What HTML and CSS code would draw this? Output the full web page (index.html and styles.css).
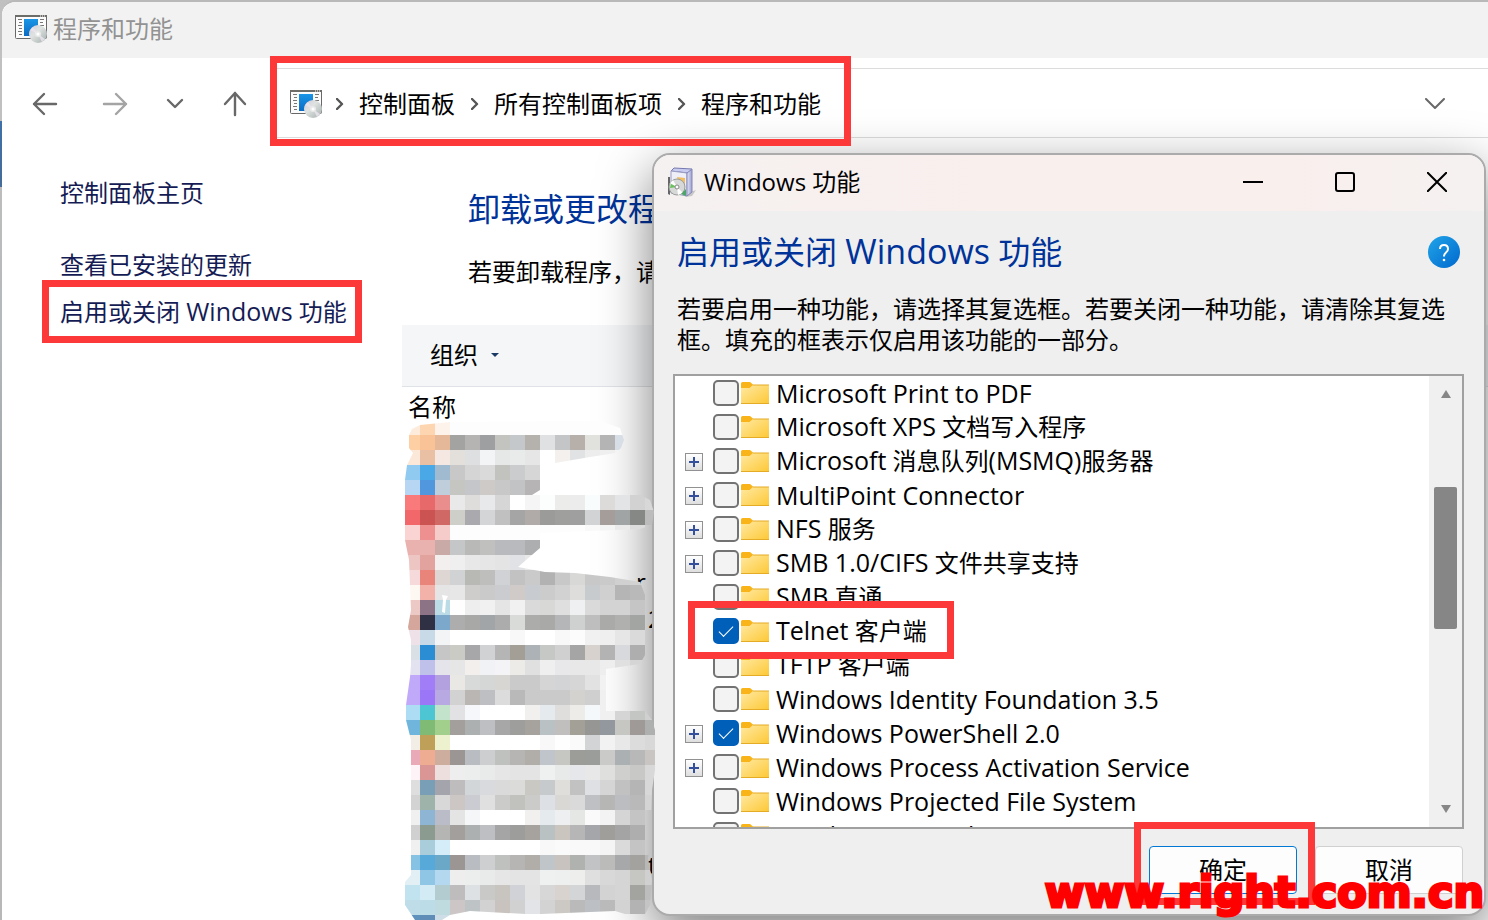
FILE: index.html
```html
<!DOCTYPE html>
<html lang="zh-CN">
<head>
<meta charset="utf-8">
<title>程序和功能</title>
<link rel="stylesheet" href="styles.css">
</head>
<body>
<svg class="defs" aria-hidden="true">
  <defs>
    <linearGradient id="gBlue" x1="0" y1="0" x2="0" y2="1"><stop offset="0" stop-color="#1a95e6"/><stop offset="1" stop-color="#0a6cc4"/></linearGradient>
    <linearGradient id="gDisc" x1="0" y1="0" x2="1" y2="1"><stop offset="0" stop-color="#d0cbd8"/><stop offset=".4" stop-color="#dfe3e2"/><stop offset="1" stop-color="#a3aeac"/></linearGradient>
    <linearGradient id="gFolder" x1="0" y1="0" x2="1" y2="1"><stop offset="0" stop-color="#ffe9a3"/><stop offset="1" stop-color="#fdc834"/></linearGradient>
    <linearGradient id="gBox" x1="0" y1="0" x2="1" y2="0"><stop offset="0" stop-color="#e6e8f8"/><stop offset="1" stop-color="#9b9ecf"/></linearGradient>
  </defs>
  <symbol id="program" viewBox="0 0 32 28">
    <rect x=".5" y=".5" width="31" height="23" rx="1" fill="#fbfbfb" stroke="#686868"/>
    <path d="M0 0h32v2H0z" fill="#6c6c69"/>
    <path d="M25 1h1M27 1h1M29 1h1" stroke="#fff"/>
    <path d="M3 4.500h4M4 7.500h3M3 10.500h4M4 13.500h3M3 16.500h4M4 19.500h3M25 4.500h4M25 7.500h3M25 10.500h4" stroke="#777"/>
    <path d="M9 4h14v17H9z" fill="url(#gBlue)"/>
    <circle cx="23" cy="19" r="9" fill="url(#gDisc)"/>
    <path d="M23 19l-8-4 3-3zM23 19l7 5-3 3z" fill="#eee5ef" opacity=".8"/>
    <circle cx="23" cy="19" r="3" fill="#e8ebea"/><circle cx="23" cy="19" r="1.500" fill="#fff"/>
  </symbol>
  <symbol id="folder" viewBox="0 0 28 23">
    <path d="M0 1.500Q0 0 1.500 0H9l3 2.500V6H0z" fill="#f9b41a"/>
    <path d="M0 6h8.500L12 3h15q1 0 1 1v17q0 1-1 1H1q-1 0-1-1z" fill="url(#gFolder)"/>
    <path d="M0 21.500h28M12 3h16" stroke="#e6ab25" fill="none"/>
  </symbol>
</svg>

<div class="desktop">
  <div class="window">
    <header class="titlebar">
      <svg class="program-icon"><use href="#program"/></svg>
      <span>程序和功能</span>
    </header>
    <div class="navbar">
      <nav class="history">
        <button aria-label="后退"><svg width="26" height="26" viewBox="0 0 26 26"><path d="M24 13H2M12 3L2 13l10 10"/></svg></button>
        <button class="dim" aria-label="前进"><svg width="26" height="26" viewBox="0 0 26 26"><path d="M2 13H24M14 3l10 10-10 10"/></svg></button>
        <button class="narrow" aria-label="最近"><svg width="18" height="12" viewBox="0 0 18 12"><path d="M2 2l7 7 7-7"/></svg></button>
        <button aria-label="向上"><svg width="26" height="26" viewBox="0 0 26 26"><path d="M12 24V2M2 13L12 2l10 11"/></svg></button>
      </nav>
      <div class="address">
        <svg class="program-icon"><use href="#program"/></svg>
        <svg class="sep" viewBox="0 0 8 12"><path d="M1 1l5 5-5 5"/></svg>
        <a href="#">控制面板</a>
        <svg class="sep" viewBox="0 0 8 12"><path d="M1 1l5 5-5 5"/></svg>
        <a href="#">所有控制面板项</a>
        <svg class="sep" viewBox="0 0 8 12"><path d="M1 1l5 5-5 5"/></svg>
        <a href="#">程序和功能</a>
        <button class="expand" aria-label="展开地址"><svg width="20" height="12" viewBox="0 0 20 12"><path d="M1 1l9 9 9-9"/></svg></button>
      </div>
    </div>
    <div class="body">
      <aside class="tasks">
        <a class="home" href="#">控制面板主页</a>
        <a href="#">查看已安装的更新</a>
        <a href="#">启用或关闭 <span class="latin">Windows</span> 功能</a>
      </aside>
      <main class="content">
        <h1>卸载或更改程序</h1>
        <p>若要卸载程序，请从列表中将其选中，然后单击“卸载”、“更改”或“修复”。</p>
        <div class="commands"><button>组织<svg width="8" height="4" viewBox="0 0 8 4"><path d="M0 0h8L4 4z" fill="#1c3a66"/></svg></button></div>
        <div class="column">名称</div>
      </main>
    </div>
  </div>

  <section class="dialog" role="dialog" aria-labelledby="dlg">
    <header class="dialog-title">
      <svg width="30" height="30" viewBox="0 0 30 30">
        <path d="M21 26l8-3-4 6-7 1z" fill="#b5b5b5" opacity=".7"/>
        <path d="M4 4l3-3 18 1-4 4z" fill="#c9ccf0" stroke="#7578ae"/>
        <path d="M4 4l16 2v23L4 26z" fill="#eeeef8" stroke="#9a9cc0"/>
        <path d="M20 6l5-4v23l-5 4z" fill="url(#gBox)" stroke="#8486b8"/>
        <path d="M10 10l8 1v11l-4 4z" fill="#f3bd62"/>
        <path d="M1 10v17l2 1V10z" fill="#666"/>
        <circle cx="10" cy="20" r="8" fill="#d6d9d7" stroke="#999d9a"/>
        <path d="M10 20l-7-4 3-3zM10 20l6 6-5 2z" fill="#fff"/><path d="M10 20l-7 1 1-4z" fill="#69c35b"/><path d="M14 27l5-5v7z" fill="#4ea36b"/>
        <circle cx="10" cy="20" r="2" fill="#fff" stroke="#888"/>
      </svg>
      <span class="name">Windows 功能</span>
      <button aria-label="最小化"><svg width="20" height="20" viewBox="0 0 20 20"><path d="M0 10h20"/></svg></button>
      <button aria-label="最大化"><svg width="20" height="20" viewBox="0 0 20 20"><rect x="1" y="1" width="18" height="18" rx="2"/></svg></button>
      <button aria-label="关闭"><svg width="20" height="20" viewBox="0 0 20 20"><path d="M0 0l20 20M20 0L0 20"/></svg></button>
    </header>
    <div class="dialog-body">
      <div class="headline">
        <h2 id="dlg">启用或关闭 <span class="latin">Windows</span> 功能</h2>
        <button class="help" aria-label="帮助"><svg width="32" height="32" viewBox="0 0 32 32"><path d="M12 13q0-4 4-4t4 4q0 2-2 3.500t-2 4" fill="none" stroke="#fff" stroke-width="2"/><circle cx="16" cy="24" r="1.300" fill="#fff"/></svg></button>
      </div>
      <p>若要启用一种功能，请选择其复选框。若要关闭一种功能，请清除其复选框。填充的框表示仅启用该功能的一部分。</p>
      <div class="tree">
        <ul>
          <li><i></i><label><input type="checkbox"><svg><use href="#folder"/></svg><span class="latin">Microsoft Print to PDF</span></label></li>
          <li><i></i><label><input type="checkbox"><svg><use href="#folder"/></svg><span><span class="latin">Microsoft XPS</span> 文档写入程序</span></label></li>
          <li><button class="plus" aria-label="展开"></button><label><input type="checkbox"><svg><use href="#folder"/></svg><span><span class="latin">Microsoft</span> 消息队列<span class="latin">(MSMQ)</span>服务器</span></label></li>
          <li><button class="plus" aria-label="展开"></button><label><input type="checkbox"><svg><use href="#folder"/></svg><span class="latin">MultiPoint Connector</span></label></li>
          <li><button class="plus" aria-label="展开"></button><label><input type="checkbox"><svg><use href="#folder"/></svg><span><span class="latin">NFS</span> 服务</span></label></li>
          <li><button class="plus" aria-label="展开"></button><label><input type="checkbox"><svg><use href="#folder"/></svg><span><span class="latin">SMB 1.0/CIFS</span> 文件共享支持</span></label></li>
          <li><i></i><label><input type="checkbox"><svg><use href="#folder"/></svg><span><span class="latin">SMB</span> 直通</span></label></li>
          <li><i></i><label><input type="checkbox" checked><svg><use href="#folder"/></svg><span><span class="latin">Telnet</span> 客户端</span></label></li>
          <li><i></i><label><input type="checkbox"><svg><use href="#folder"/></svg><span><span class="latin">TFTP</span> 客户端</span></label></li>
          <li><i></i><label><input type="checkbox"><svg><use href="#folder"/></svg><span class="latin">Windows Identity Foundation 3.5</span></label></li>
          <li><button class="plus" aria-label="展开"></button><label><input type="checkbox" checked><svg><use href="#folder"/></svg><span class="latin">Windows PowerShell 2.0</span></label></li>
          <li><button class="plus" aria-label="展开"></button><label><input type="checkbox"><svg><use href="#folder"/></svg><span class="latin">Windows Process Activation Service</span></label></li>
          <li><i></i><label><input type="checkbox"><svg><use href="#folder"/></svg><span class="latin">Windows Projected File System</span></label></li>
          <li><i></i><label><input type="checkbox"><svg><use href="#folder"/></svg><span class="latin">Windows TIFF IFilter</span></label></li>
        </ul>
        <div class="scrollbar">
          <svg width="12" height="10" viewBox="0 0 12 10"><path d="M6 1l5 8H1z"/></svg>
          <div class="track"><div class="thumb"></div></div>
          <svg width="12" height="10" viewBox="0 0 12 10"><path d="M6 9L1 1h10z"/></svg>
        </div>
      </div>
      <footer><button class="ok">确定</button><button>取消</button></footer>
    </div>
  </section>

  <svg class="mosaic" width="255" height="500" viewBox="405 420 255 500" aria-hidden="true">
    <clipPath id="smudge"><path d="M409 435L412 429 420 425 450 422 600 421 620 428 624 440 621 448 616 453 590 457 555 463 540 463 540 490 532 495 640 495 650 500 654 512 652 525 640 529 540 533 540 548 518 567 545 572 575 573 610 577 640 582 645 595 645 655 640 664 606 669 606 711 645 711 652 720 655 730 655 770 652 790 650 840 648 860 652 880 650 905 645 914 625 914 615 911 541 914 526 914 470 911 450 915 442 920 415 920 411 914 405 905 405 882 411 875 411 740 406 720 406 705 410 677 411 665 411 640 408 627 411 610 409 560 405 540 405 480 407 465 413 453 409 448z"/></clipPath>
    <clipPath id="page"><path d="M405 420h247v500H405z"/></clipPath>
    <g class="remnants" clip-path="url(#page)"><text x="636" y="591">r</text><text x="648" y="628">2</text><text x="648" y="874">t</text></g>
    <g id="cells" clip-path="url(#smudge)"></g>
    <path d="M442 595l6 1-2 4-1 13-3-1 1-12z" fill="#fff"/>
  </svg>

  <div class="mark mark-address"></div>
  <div class="mark mark-task"></div>
  <div class="mark mark-telnet"></div>
  <div class="mark mark-ok"></div>
  <div class="watermark">www.right.com.cn</div>
</div>
<script src="mosaic.js"></script>
</body>
</html>
```
FILE: mosaic.js
```js
// One line per 15px row; "-" leaves a cell empty, "*n" repeats a colour.
const rows = `
fdebdc fdd5b0 fef3ea fdfdfd*12
fecfa3 fac397 e5b899 a3a3a1 b5b4b2 9d9fa0 c3c3c0 c4c8cb b5b1ad dfe1e3 c3c5c7 b7afaa e1e1de b4b4b4 d8dee6
fbe8d9 e9c0a4 f5e8e2 e3dfdb dedfe1 f3f4f6 e6e7e7 e9ebea e6e6e6 - f3f0ed e1e2e4 ededed efefef f4f4f4
90caf0 4aa8e6 a0bbd0 c8c8c9 d5d5d5 dadada c2c2bf cbccce d6d6d6
b6d6f3 5097dd c0cedb c5c5c2 c5c6c9 cdcac8 c8c8c8 c1c3c5 b7b4b5
fa7a7c e8696a e98e8d e8e9e8 dedddb e8e9eb d6d6d6 ffffff f5f5f5 fcfefe ececea ececec f9fcfc dddbd9 e3e4e6 d2d2d2 d8d8d8
f2676a cb5453 d06865 cfcfca aaa9ae d4d5d7 c0c0c0 a5a5a5 b0aba8 9b9c99 9f9f9e 9f9f9f d1d3d4 a49d9a a0a4a4 868886 bcbcbc
fad3d3 ee908f f6cccb fdfdfd*9 f9f9f9 f4f4f4 eaeaea dcdcdc
e9b2af e9b2af c9aaa6 c4c6c7 b9b9b8 c0c0be b8babd b8babd acaeb0 d6d6d6
edc6c4 e2a29e f3efee efefef e8e8e8 e6e6e6 e4e4e4 e1e2e5 e8e8e8
f6d9da e9847b ded6d3 d1d2d4 b8b8b5 bebebc d1d2d5 c1c2c1 cacaca b2b2b2 c8c8c8 d8d8d6 c8c8c8 cacaca d0d0d0 d2d2d2
fef8f2 f2b2aa e5e5e5 e7e7e7 cfcdcb cacaca cacccf d0cbc8 c8cbcf cccccc d2d2d2 dedddb c8cbce d0d0d0 b5b5b5 b9b9b9
edc9c5 8c7386 bbdce6 fefefe eeeeee f1f1f1 e5e5e5 f1f1f1 dadada d8d8d6 dfdfdf eef0f2 dadada d3d3d3 d3d3d3 c5c5c5
d5a79c 2f3044 7ba8cb adadad a8a8a6 a1a5a8 acacac d9dbd9 acacaa a9a9a7 b5b6b8 cfd1d0 bebebe aaaaa8 b0b0ae a3a5a3
efe1e8 c8d9e8 f2f4f6 ffffff*4 f8f8f8 ffffff*2 f8f8f8 fcfcfc f1f1f1 efefef e6e6e6 dadada
d9e0e6 2b8dd3 c6c6c6 cbcbc6 a7a7aa d1d2d4 b5b5b5 a39f96 adb2b6 c6c8c5 d0d0d0 a5a5a5 d8d2ce b3b3b3 d7d9dc aeaeae
e3e2f0 bfc1eb e5e4ea e6e6e6 f2efec f1f2f6 f4f4f6 edebe8 e0e0e0 efefef e8e8ea e8e8e8 e8e8e8 eeeeee e0e0e0 d5d5d5
c1a9fa a17df8 b3a0de eae8e5 d8dada d5d7d6 d7d6d3 cacaca cacaca d5d5d5 d2d4d6 d6d6d6 e2e2e2 f2f2f2
c1a9fa 9b77f8 b9a9e2 d2d2d2 b9b6b3 bebfc2 dcdcdc b9b9b9 cacaca cacaca cacaca d3d2cf cfcfcf f0f0f0
addcf5 4dc5d2 c3e3ca e2e2e4 f5f7fa ffffff*3 f2f0ee e5eaee dfdedc eeece9 f4f8fb f0f0f0 d5d5d5 c4c6c4 d0d0d0
70b6dc 7fbb75 a3cf8c a39f9c acb0b1 bebfc2 a7a7a7 9e9e9c a6a29e bac1c5 c0bfbd a3a098 969695 92989d c6c6c3 9f9a98 adb0ae
f2ede5 bfa058 edf1cd ffffff*6 f8f8f8 fefefe fafafa d3d4d6 f2f2f2 e8e8e8 dcdcdc d8d8d8
e9a9b6 eeac92 cdad9d 9b9693 b9bdc1 cdced0 bfc1bf b6b5b3 b1ada9 bfc5ca c6c6c3 9c9d99 9b9d9b cacac8 abb0b3 b8b8b8 c9c5c2
fef3f6 d99694 ecdfdd eeeeee eceeed e8ebea e6e6e6 e4e4e4 e4e4e4 eff1f0 e8e9e9 e6e7ea e8e8e8 dfdfdd cfcfcd c8c8c6 d8d8d8
dedede 789fb5 a4a5ac bfbcbe d2d6d8 d8dadd dadada dbdbd9 cac8c3 c6cacd e0dedb c2c2c2 dfe0e3 d5d5d5 c1c1c1 b5b5b5 d8d8d8
d3d3d3 9eb4ab d8d8d8 ccc6c5 cbccd1 dfe0df cbcbc9 c1c1be cbcbc9 dde1e5 d9d8d5 dadada bec0c4 b6b7b4 bbbdc0 b9b9b9 d4d4d4
f0f0f0 8eb5d3 babdc8 e4e4e4 f4f6f8 ffffff*3 f2f0ee e5eaee eeeff0 e5e7e5 fafafa f3f3f3 d5d5d5 c4c4c4
d0d0d0 8b9b8f b5b6b3 a39f9c acb0b1 bebfc2 a5a5a5 9d9d9b a6a29e bac1c3 cbc5c0 b6b6b6 a5a6a9 9f9e9b a4a4a4 aeaeae
f0f0f0 a9cddb d4edf9 ffffff*6 f8f8f8 fafafa f9f9f9 f9f9f9 f4f4f4 dadada c4c4c4
86c2e3 57a9da 6ba8c8 9b9693 b9bdc1 cecfd1 bfc1bf b6b5b3 b1ada9 bfc5c9 c8c3bf b0b2b0 c1c3c5 bbbbb9 a7a8aa a3a29e b8b8b8
e2eff5 8fc6e6 b3d8f0 eeeeee eceeed e8ebea e6e6e6 e4e4e4 e4e4e4 eff1f0 eef0ef eeeeec dfdfdf d8d8d8 d5d5d5 c6c6c2 d0d0d0
c0e3ef d2ebf5 b3ccd0 bfbcbe dde1e4 c9c9c7 c8c4c0 d1d2d7 e3e3e3 d7d7d7 d8d3cf d3d5d7 b8b9bc d3d3d3 d5d5d5 a3a39f bdbdbd
bfdde8 bcdde8 bfdbe0 ccc6c6 bec3c6 d2d2d2 c8c3bf d1d1d1 e3e4e7 d3d3d3 ccc8c4 bababa bcc0c4 bababa d3d3d3 b3b3b3 c4c4c4
5f93bd 5f8db8 cfdde6`.trim().split("\n");

const group = document.getElementById("cells");
rows.forEach((line, r) => {
  let c = 0;
  line.split(" ").forEach(token => {
    const [colour, times] = token.split("*");
    const span = Number(times || 1);
    if (colour !== "-") {
      const rect = document.createElementNS("http://www.w3.org/2000/svg", "rect");
      rect.setAttribute("x", 405 + c * 15);
      rect.setAttribute("y", 420 + r * 15);
      rect.setAttribute("width", span * 15);
      rect.setAttribute("height", 15);
      rect.setAttribute("fill", "#" + colour);
      group.appendChild(rect);
    }
    c += span;
  });
});
```
FILE: styles.css
```css
* { box-sizing: border-box; }
body {
  margin: 0;
  font: 24px/32px "Open Sans", "Noto Sans CJK SC", sans-serif;
  color: #000;
}
h1, h2, p, ul { margin: 0; padding: 0; font-weight: 400; }
button { font: inherit; color: inherit; border: 0; padding: 0; background: none; }
a { color: inherit; text-decoration: none; }
svg { flex: none; display: block; }
.defs { position: absolute; width: 0; height: 0; }
.latin { font-size: 25px; line-height: 1; }

.desktop {
  position: relative;
  height: 100vh;
  overflow: hidden;
  display: flex;
  padding: 0 0 0 2px;
  background: linear-gradient(#c0c0c0 121px, #3f70a8 121px, #466c98 187px, #bdbdbd 187px, #b4b8bb 340px, #9fa5aa 500px, #b8b8b8 600px);
}
.window {
  flex: 1;
  min-width: 0;
  display: flex;
  flex-direction: column;
  background: #fff;
  border-top: 2px solid #b9b9b9;
  border-top-left-radius: 14px;
}
.titlebar {
  height: 56px;
  display: flex;
  align-items: center;
  gap: 6px;
  padding: 0 0 2px 13px;
  background: #f2f2f2;
  color: #929292;
  border-top-left-radius: 14px;
}
.program-icon { width: 32px; height: 28px; }
.navbar { display: flex; padding-top: 10px; }
.history {
  width: 269px;
  display: flex;
  align-items: center;
  padding: 2px 0 0 30px;
  gap: 44px;
}
.history svg, .expand svg, .sep { fill: none; stroke: #686868; stroke-width: 2; stroke-linecap: round; stroke-linejoin: round; }
.history svg { stroke-width: 2.4; }
.history .dim { opacity: .6; }
.history .narrow { margin: 0 -5px 0 -6px; }
.address {
  flex: 1;
  height: 70px;
  display: flex;
  align-items: center;
  border: solid #dcdcdc;
  border-width: 1px 0;
  padding: 2px 43px 0 19px;
}
.address .sep { width: 8px; height: 12px; margin: 0 15px 0 16px; stroke: #555; stroke-width: 2.4; }
.address .program-icon + .sep { margin-left: 14px; }
.expand { margin-left: auto; }

.body { flex: 1; display: flex; min-height: 0; }
.tasks {
  width: 400px;
  padding: 39px 0 0 58px;
  display: flex;
  flex-direction: column;
  gap: 15px;
  color: #151c55;
}
.tasks .home { margin-bottom: 25px; }
.content { flex: 1; min-width: 0; white-space: nowrap; overflow: hidden; }
h1, h2 { font-size: 32px; line-height: 42px; color: #003399; }
h2 .latin { font-size: 34px; }
.content h1 { padding: 50px 0 0 66px; }
.content p { padding: 26px 0 0 66px; }
.commands {
  margin-top: 37px;
  height: 62px;
  padding: 0 0 2px 28px;
  display: flex;
  align-items: center;
  background: #f4f6f8;
  border-bottom: 1px solid #dfe2e6;
}
.commands button { display: flex; align-items: center; gap: 13px; }
.column { padding: 4px 6px; }

.dialog {
  position: absolute;
  left: 652px;
  right: 2px;
  top: 153px;
  bottom: 4px;
  display: flex;
  flex-direction: column;
  background: #efefef;
  border: 2px solid #ababab;
  border-radius: 18px;
  overflow: hidden;
  box-shadow: 0 18px 52px rgba(0, 0, 0, .5);
}
.dialog-title {
  height: 56px;
  display: flex;
  align-items: center;
  padding: 0 37px 2px 13px;
  background: linear-gradient(90deg, #f5f1f1, #f9efed 40%, #f9efed 75%, #f5f1f1);
}
.dialog-title .name { flex: 1; padding-left: 7px; }
.dialog-title button { margin-left: 72px; }
.dialog-title button svg { fill: none; stroke: #000; stroke-width: 2; }
.dialog-body {
  flex: 1;
  min-height: 0;
  display: flex;
  flex-direction: column;
  padding: 20px 20px 20px 19px;
}
.headline { display: flex; align-items: center; justify-content: space-between; padding: 0 4px; }
.help { border-radius: 50%; background: linear-gradient(135deg, #21a5e8, #0068ce); }
.dialog-body p { padding: 20px 4px 19px; line-height: 31px; }
.tree {
  flex: 1;
  min-height: 0;
  display: flex;
  background: #fff;
  border: 2px solid #a0a0a0;
}
.tree ul { flex: 1; min-width: 0; overflow: hidden; list-style: none; padding-left: 10px; }
.tree li { height: 34px; display: flex; align-items: center; gap: 10px; }
.tree i { width: 18px; }
.tree label { display: flex; align-items: center; }
.tree label svg { width: 28px; height: 23px; margin: 0 7px 0 2px; }
.plus {
  width: 18px;
  height: 18px;
  margin-top: 2px;
  border: 1px solid #919191;
  background:
    linear-gradient(#34509c, #34509c) center / 10px 2px no-repeat,
    linear-gradient(#34509c, #34509c) center / 2px 10px no-repeat,
    linear-gradient(#fff, #dedede);
}
.tree input {
  appearance: none;
  width: 26px;
  height: 26px;
  margin: 0;
  border: 2px solid #737373;
  border-radius: 5px;
  background: #f3f3f3;
  display: grid;
  place-items: center;
}
.tree input:checked { border-color: #005fb8; background: #005fb8; }
.tree input:checked::after {
  content: "";
  width: 13px;
  height: 6px;
  margin-bottom: 4px;
  border: solid #fff;
  border-width: 0 0 1px 1px;
  transform: rotate(-45deg);
}
.scrollbar {
  width: 33px;
  padding: 13px 0;
  display: flex;
  flex-direction: column;
  align-items: center;
  background: #f0f0f0;
}
.scrollbar svg { fill: #868686; }
.track { flex: 1; width: 23px; padding: 88px 0 0; }
.thumb { height: 142px; background: #868686; border-radius: 2px; }
footer { display: flex; justify-content: flex-end; gap: 18px; padding: 17px 1px 0 0; }
footer button { width: 148px; height: 48px; background: #fdfdfd; border: 1px solid #d0d0d0; border-radius: 4px; }
footer .ok { border-color: #0078d4; }

.mosaic { position: absolute; left: 405px; top: 420px; }
.remnants { font-size: 24px; }
.mark { position: absolute; border: 7px solid #fc3838; }
.mark-address { left: 270px; top: 56px; width: 581px; height: 90px; }
.mark-task { left: 42px; top: 280px; width: 320px; height: 63px; }
.mark-telnet { left: 688px; top: 601px; width: 266px; height: 58px; }
.mark-ok { right: 173px; bottom: 15px; width: 181px; height: 83px; }
.watermark {
  position: absolute;
  right: 4px;
  bottom: 4px;
  font: 700 43px/48px "DejaVu Sans", sans-serif;
  color: #f00;
  -webkit-text-stroke: 3px #f00;
}
```
